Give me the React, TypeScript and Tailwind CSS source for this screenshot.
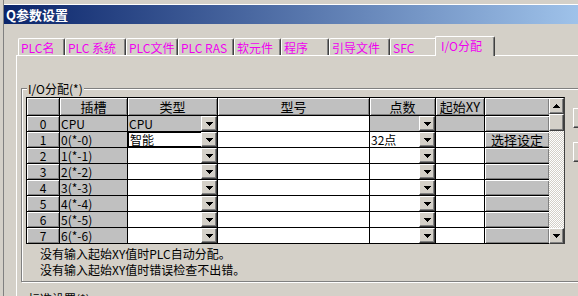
import React from "react";

const TABS = [
  { label: "PLC名", w: "w-[47px]" },
  { label: "PLC 系统", w: "w-[61px]" },
  { label: "PLC文件", w: "w-[52px]" },
  { label: "PLC RAS", w: "w-[56px]" },
  { label: "软元件", w: "w-[47px]" },
  { label: "程序", w: "w-[48px]" },
  { label: "引导文件", w: "w-[61px]" },
  { label: "SFC", w: "w-[47px]" },
];

type Row = { idx: string; slot: string; type?: string; pts?: string; btn?: string; cpu?: boolean; focus?: boolean };

const ROWS: Row[] = [
  { idx: "0", slot: "CPU", type: "CPU", cpu: true },
  { idx: "1", slot: "0(*-0)", type: "智能", pts: "32点", btn: "选择设定", focus: true },
  { idx: "2", slot: "1(*-1)" },
  { idx: "3", slot: "2(*-2)" },
  { idx: "4", slot: "3(*-3)" },
  { idx: "5", slot: "4(*-4)" },
  { idx: "6", slot: "5(*-5)" },
  { idx: "7", slot: "6(*-6)" },
];

const RAISED =
  "border border-t-white border-l-white border-r-[#404040] border-b-[#404040] shadow-[inset_-1px_-1px_0_#808080]";

function Arrow({ up }: { up?: boolean }) {
  return (
    <svg width="7" height="4" viewBox="0 0 7 4" className={up ? "rotate-180" : ""}>
      <rect x="0" y="0" width="7" height="1" fill="#000" />
      <rect x="1" y="1" width="5" height="1" fill="#000" />
      <rect x="2" y="2" width="3" height="1" fill="#000" />
      <rect x="3" y="3" width="1" height="1" fill="#000" />
    </svg>
  );
}

function DropBtn() {
  return (
    <div className={`w-[16px] h-full shrink-0 bg-[#d4d0c8] flex items-center justify-center ${RAISED}`}>
      <Arrow />
    </div>
  );
}

function HeadCell({ children }: { children?: React.ReactNode }) {
  return (
    <div className="bg-[#c0c0c0] shadow-[inset_1px_1px_0_#fff,inset_-1px_-1px_0_#808080] flex items-center justify-center text-[13px]">
      {children}
    </div>
  );
}

export default function App() {
  return (
    <div className="w-[578px] h-[296px] overflow-hidden bg-[#d4d0c8] flex text-[12px] leading-[15px] text-black font-['Noto_Sans_CJK_SC',sans-serif]">
      {/* strip of the window behind */}
      <div className="w-[4px] shrink-0 border-r border-[#808080] bg-[#d4d0c8]" />

      <div className="flex-1 min-w-0 flex flex-col">
        <div className="h-[5px] shrink-0 border-b border-white" />

        {/* Title bar */}
        <div className="h-[19px] shrink-0 flex items-center pl-[2px] bg-[linear-gradient(to_right,#0a246a,#a6caf0_105%)] text-white text-[13px] font-bold">
          Q参数设置
        </div>

        {/* Body */}
        <div className="pl-[12px] pt-[12px] flex flex-col">
          {/* Tabs */}
          <div className="h-[19px] flex items-end pl-[2px]">
            {TABS.map((t) => (
              <div
                key={t.label}
                className={`${t.w} h-[17px] shrink-0 border-t border-l border-r border-t-white border-l-white border-r-[#404040] shadow-[inset_-1px_0_0_#808080] rounded-t-[2px] pl-[2px] flex items-center text-[#f000f0] whitespace-nowrap`}
              >
                {t.label}
              </div>
            ))}
            <div className="w-[60px] h-[20px] -ml-[2px] -mb-px relative z-10 shrink-0 bg-[#d4d0c8] border-t border-l border-r border-t-white border-l-white border-r-[#404040] shadow-[inset_-1px_0_0_#808080] rounded-t-[2px] pl-[5px] pb-[2px] flex items-center text-[#f000f0] whitespace-nowrap">
              I/O分配
            </div>
          </div>

          {/* Tab panel */}
          <div className="border-t border-l border-white pl-[4px] pt-[32px]">
            {/* Group: I/O分配 */}
            <div className="relative w-[640px] h-[194px] border border-[#808080] shadow-[inset_1px_1px_0_#fff,1px_1px_0_#fff] pl-[4px] pt-[8px]">
              <span className="absolute -top-[8px] left-[5px] px-[1px] bg-[#d4d0c8] leading-[15px]">I/O分配(*)</span>

              <div className="flex items-stretch">
                {/* Grid */}
                <div className="grid grid-cols-[32px_67px_89px_151px_65px_48px_64px] grid-rows-[17px_repeat(8,15px)] gap-px bg-black border-l border-t border-b border-black">
                  <HeadCell />
                  <HeadCell>插槽</HeadCell>
                  <HeadCell>类型</HeadCell>
                  <HeadCell>型号</HeadCell>
                  <HeadCell>点数</HeadCell>
                  <HeadCell>起始XY</HeadCell>
                  <HeadCell />

                  {ROWS.map((r) => (
                    <React.Fragment key={r.idx}>
                      <div className="bg-[#c0c0c0] shadow-[inset_1px_1px_0_#fff,inset_-1px_-1px_0_#808080] flex items-center justify-center">
                        {r.idx}
                      </div>
                      <div className="bg-[#c0c0c0] pl-[1px] flex items-center whitespace-nowrap">{r.slot}</div>
                      <div
                        className={`flex items-stretch ${r.cpu ? "bg-[#c0c0c0]" : "bg-white"} ${
                          r.focus ? "shadow-[inset_0_0_0_1px_#000,inset_0_0_0_2px_#fff]" : ""
                        }`}
                      >
                        <span className={`flex-1 flex items-center whitespace-nowrap ${r.focus ? "pl-[2px]" : "pl-[1px]"}`}>
                          {r.type}
                        </span>
                        <DropBtn />
                      </div>
                      <div className="bg-white" />
                      <div className={`flex items-stretch ${r.cpu ? "bg-[#c0c0c0]" : "bg-white"}`}>
                        <span className="flex-1 pl-[1px] flex items-center whitespace-nowrap">{r.pts}</span>
                        <DropBtn />
                      </div>
                      <div className={r.cpu ? "bg-[#c0c0c0]" : "bg-white"} />
                      <div className="bg-[#c0c0c0] shadow-[inset_1px_1px_0_#fff,inset_-1px_-1px_0_#808080] flex items-center justify-center whitespace-nowrap text-[13px]">
                        {r.btn}
                      </div>
                    </React.Fragment>
                  ))}
                </div>

                {/* Scrollbar */}
                <div className="w-[16px] shrink-0 flex flex-col border-t border-black border-r border-r-[#404040]">
                  <div className={`h-[16px] shrink-0 bg-[#d4d0c8] flex items-center justify-center ${RAISED}`}>
                    <Arrow up />
                  </div>
                  <div className={`h-[17px] shrink-0 bg-[#d4d0c8] ${RAISED}`} />
                  <div className="flex-1 bg-[repeating-conic-gradient(#d4d0c8_0%_25%,#ffffff_0%_50%)] bg-size-[2px_2px]" />
                  <div className={`h-[16px] shrink-0 bg-[#d4d0c8] flex items-center justify-center ${RAISED}`}>
                    <Arrow />
                  </div>
                </div>

                {/* Side buttons, cut off by the window edge */}
                <div className="pl-[8px] pt-[11px] flex flex-col gap-[14px]">
                  <div className={`w-[70px] h-[20px] bg-[#d4d0c8] ${RAISED}`} />
                  <div className={`w-[70px] h-[20px] bg-[#d4d0c8] ${RAISED}`} />
                </div>
              </div>

              <div className="mt-[2px] pl-[14px] leading-[16px]">
                <p>没有输入起始XY值时PLC自动分配。</p>
                <p>没有输入起始XY值时错误检查不出错。</p>
              </div>
            </div>

            {/* Group: 标准设置 */}
            <div className="relative w-[640px] h-[60px] mt-[16px] border border-[#808080] shadow-[inset_1px_1px_0_#fff,1px_1px_0_#fff]">
              <span className="absolute -top-[8px] left-[5px] px-[1px] bg-[#d4d0c8] leading-[15px]">标准设置(*)</span>
            </div>
          </div>
        </div>
      </div>
    </div>
  );
}
